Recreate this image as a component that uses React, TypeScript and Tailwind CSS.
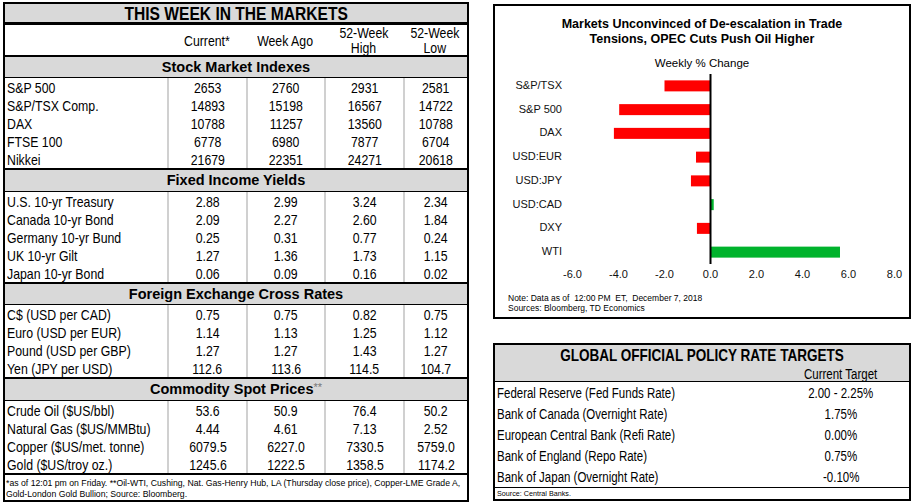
import React from 'react';

type Row = [string, string, string, string, string];

interface Section {
  title: React.ReactNode;
  /** border-box height of the grey band, incl. its top/bottom rules */
  bandClass: string;
  rows: Row[];
}

const SANS = "font-['Liberation_Sans',Arial,sans-serif]";

const SECTIONS: Section[] = [
  {
    title: 'Stock Market Indexes',
    bandClass: 'h-[21px] border-b',
    rows: [
      ['S&P 500', '2653', '2760', '2931', '2581'],
      ['S&P/TSX Comp.', '14893', '15198', '16567', '14722'],
      ['DAX', '10788', '11257', '13560', '10788'],
      ['FTSE 100', '6778', '6980', '7877', '6704'],
      ['Nikkei', '21679', '22351', '24271', '20618'],
    ],
  },
  {
    title: 'Fixed Income Yields',
    bandClass: 'h-[24px] border-t-2 border-b',
    rows: [
      ['U.S. 10-yr Treasury', '2.88', '2.99', '3.24', '2.34'],
      ['Canada 10-yr Bond', '2.09', '2.27', '2.60', '1.84'],
      ['Germany 10-yr Bund', '0.25', '0.31', '0.77', '0.24'],
      ['UK 10-yr Gilt', '1.27', '1.36', '1.73', '1.15'],
      ['Japan 10-yr Bond', '0.06', '0.09', '0.16', '0.02'],
    ],
  },
  {
    title: 'Foreign Exchange Cross Rates',
    bandClass: 'h-[23px] border-t-2 border-b',
    rows: [
      ['C$ (USD per CAD)', '0.75', '0.75', '0.82', '0.75'],
      ['Euro (USD per EUR)', '1.14', '1.13', '1.25', '1.12'],
      ['Pound (USD per GBP)', '1.27', '1.27', '1.43', '1.27'],
      ['Yen (JPY per USD)', '112.6', '113.6', '114.5', '104.7'],
    ],
  },
  {
    title: (
      <>
        Commodity Spot Prices
        <span className="relative -top-[3px] text-[11px] font-normal text-[#777]">**</span>
      </>
    ),
    bandClass: 'h-[24px] border-t-2 border-b',
    rows: [
      ['Crude Oil ($US/bbl)', '53.6', '50.9', '76.4', '50.2'],
      ['Natural Gas ($US/MMBtu)', '4.44', '4.61', '7.13', '2.52'],
      ['Copper ($US/met. tonne)', '6079.5', '6227.0', '7330.5', '5759.0'],
      ['Gold ($US/troy oz.)', '1245.6', '1222.5', '1358.5', '1174.2'],
    ],
  },
];

const GRID = 'grid grid-cols-[162px_79px_78px_79px_64px]';

const BARS: { label: string; value: number }[] = [
  { label: 'S&P/TSX', value: -2.0 },
  { label: 'S&P 500', value: -3.97 },
  { label: 'DAX', value: -4.2 },
  { label: 'USD:EUR', value: -0.63 },
  { label: 'USD:JPY', value: -0.85 },
  { label: 'USD:CAD', value: 0.14 },
  { label: 'DXY', value: -0.59 },
  { label: 'WTI', value: 5.63 },
];

const TICKS = [-6, -4, -2, 0, 2, 4, 6, 8];

const POLICY: [string, string][] = [
  ['Federal Reserve (Fed Funds Rate)', '2.00 - 2.25%'],
  ['Bank of Canada (Overnight Rate)', '1.75%'],
  ['European Central Bank (Refi Rate)', '0.00%'],
  ['Bank of England (Repo Rate)', '0.75%'],
  ['Bank of Japan (Overnight Rate)', '-0.10%'],
];

/**
 * The sheet was set in Arial Narrow, which isn't installed — squeeze Arial-metric
 * text horizontally instead. `left` pins it to the start of its cell.
 */
function Narrow({ children, left = false }: { children: React.ReactNode; left?: boolean }) {
  return (
    <span
      className={
        left
          ? 'inline-block origin-left scale-x-[0.82] whitespace-nowrap'
          : 'inline-block origin-center scale-x-[0.82] whitespace-nowrap'
      }
    >
      {children}
    </span>
  );
}

/** One data row of the markets table: label + four centred figures. */
function DataRow({ row }: { row: Row }) {
  const [label, ...values] = row;
  return (
    <div className={`${GRID} h-[18px]`}>
      <div className="flex items-center pl-[2px]">
        <Narrow left>{label}</Narrow>
      </div>
      {values.map((v, i) => (
        <div key={i} className="flex items-center justify-center border-l-2 border-[#d0d0d0]">
          <Narrow>{v}</Narrow>
        </div>
      ))}
    </div>
  );
}

function MarketsTable() {
  return (
    <div className={`mt-[2px] ml-[3px] w-[466px] shrink-0 border-2 border-black bg-white text-black ${SANS}`}>
      <div className="flex h-[21px] items-center justify-center border-b-[3px] border-black bg-[#d9d9d9] text-[19px] leading-none font-bold">
        <Narrow>THIS WEEK IN THE MARKETS</Narrow>
      </div>

      <div className={`${GRID} h-[32px] border-b-2 border-black text-[15px] leading-[15px]`}>
        <div />
        <div className="flex items-center justify-center">
          <Narrow>Current*</Narrow>
        </div>
        <div className="flex items-center justify-center">
          <Narrow>Week Ago</Narrow>
        </div>
        <div className="flex flex-col items-center justify-center overflow-visible text-center">
          <Narrow>52-Week</Narrow>
          <Narrow>High</Narrow>
        </div>
        <div className="flex flex-col items-center justify-center overflow-visible text-center">
          <Narrow>52-Week</Narrow>
          <Narrow>Low</Narrow>
        </div>
      </div>

      {SECTIONS.map((section, i) => (
        <div key={i}>
          <div
            className={`flex items-center justify-center border-black bg-[#d9d9d9] text-[14.5px] leading-none font-bold ${section.bandClass}`}
          >
            <span>{section.title}</span>
          </div>
          <div className="text-[15px] leading-none">
            {section.rows.map((row) => (
              <DataRow key={row[0]} row={row} />
            ))}
          </div>
        </div>
      ))}

      <div className="h-[27px] border-t-2 border-black pt-[3px] pl-[1px] text-[8.7px] leading-[11px] whitespace-nowrap">
        <div>
          *as of 12:01 pm on Friday. **Oil-WTI, Cushing, Nat. Gas-Henry Hub, LA (Thursday close price), Copper-LME
          Grade A,
        </div>
        <div>Gold-London Gold Bullion; Source: Bloomberg.</div>
      </div>
    </div>
  );
}

function ChangeChart() {
  const zeroX = 215.5;
  const unit = 23;
  const band = 23.75;
  const top = 4;
  return (
    <svg width={414} height={215} className="block" fontFamily="'Liberation Sans', Arial, sans-serif">
      {BARS.map((b, i) => {
        const cy = top + band * (i + 0.5);
        const w = Math.abs(b.value) * unit;
        const x = b.value < 0 ? zeroX - w : zeroX;
        return (
          <g key={b.label}>
            <text x={67} y={cy} textAnchor="end" dominantBaseline="middle" fontSize={11} fill="#111">
              {b.label}
            </text>
            <rect x={x} y={cy - 5.5} width={w} height={11} fill={b.value < 0 ? '#ff0000' : '#00b32c'} />
          </g>
        );
      })}
      <line x1={zeroX} x2={zeroX} y1={top} y2={194} stroke="#000" strokeWidth={2} />
      {TICKS.map((t) => (
        <text
          key={t}
          x={zeroX + t * unit}
          y={205}
          textAnchor="middle"
          dominantBaseline="middle"
          fontSize={11}
          fill="#111"
        >
          {t.toFixed(1)}
        </text>
      ))}
    </svg>
  );
}

function ChartPanel() {
  return (
    <div className={`h-[315px] border-2 border-black bg-white text-black ${SANS}`}>
      <div className="pt-[11px] text-center text-[12.5px] leading-[15px] font-bold">
        <div>Markets Unconvinced of De-escalation in Trade</div>
        <div>Tensions, OPEC Cuts Push Oil Higher</div>
      </div>
      <div className="mt-[9px] text-center text-[11.5px] leading-[14px]">Weekly % Change</div>
      <div>
        <ChangeChart />
      </div>
      <div className="mt-[8px] pl-[13px] text-[8.5px] leading-[10px] whitespace-pre">
        <div>Note: Data as of  12:00 PM  ET,  December 7, 2018</div>
        <div>Sources: Bloomberg, TD Economics</div>
      </div>
    </div>
  );
}

function PolicyTable() {
  return (
    <div className={`mt-[24px] h-[158px] border-2 border-black bg-white text-black ${SANS}`}>
      <div className="h-[37px] border-b border-black bg-[#d9d9d9]">
        <div className="flex h-[21px] items-center justify-center text-[16.5px] leading-none font-bold">
          <Narrow>GLOBAL OFFICIAL POLICY RATE TARGETS</Narrow>
        </div>
        <div className="grid h-[15px] grid-cols-[1fr_136px] text-[14px] leading-none">
          <div />
          <div className="flex items-center justify-center">
            <Narrow>Current Target</Narrow>
          </div>
        </div>
      </div>
      {POLICY.map(([name, rate]) => (
        <div key={name} className="grid h-[21px] grid-cols-[1fr_136px] text-[14px] leading-none">
          <div className="flex items-center pl-[2px]">
            <Narrow left>{name}</Narrow>
          </div>
          <div className="flex items-center justify-center">
            <Narrow>{rate}</Narrow>
          </div>
        </div>
      ))}
      <div className="flex h-[12px] items-center border-t border-black pl-[2px] text-[7.2px] leading-none">
        Source: Central Banks.
      </div>
    </div>
  );
}

export default function App() {
  return (
    <div className="flex h-[503px] w-[918px] items-start bg-white">
      <MarketsTable />
      <div className="mt-[4px] ml-[24px] flex w-[418px] shrink-0 flex-col">
        <ChartPanel />
        <PolicyTable />
      </div>
    </div>
  );
}
